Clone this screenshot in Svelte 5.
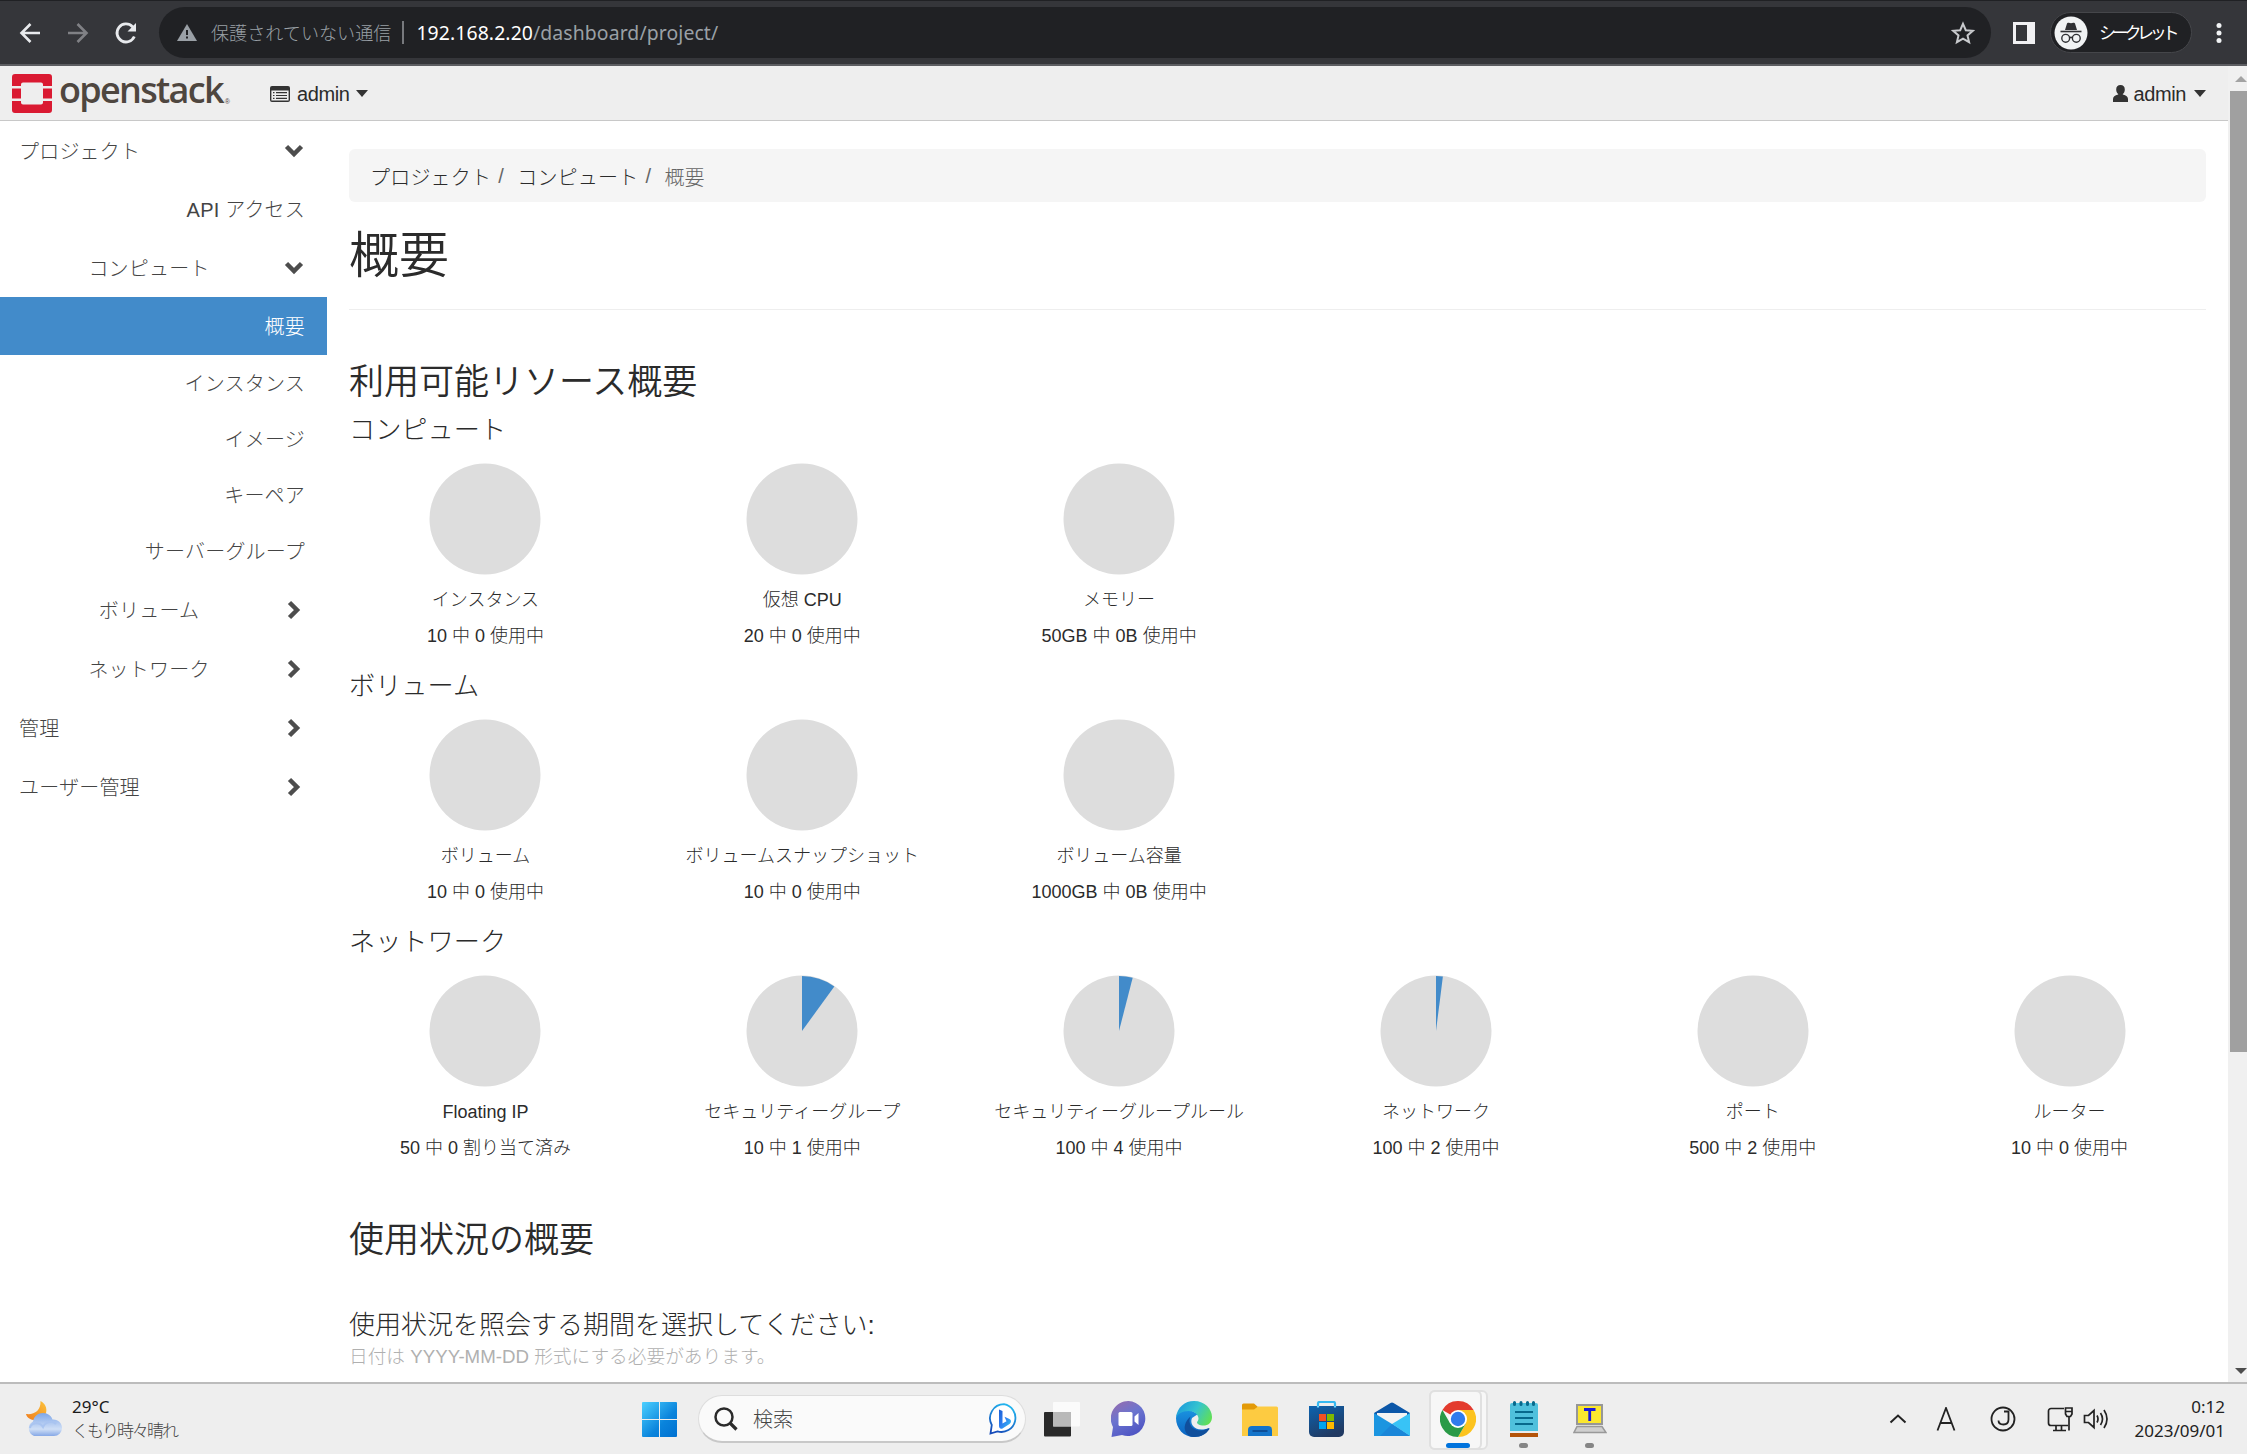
<script lang="ts">
	type NavItem = {
		label: string
		kind: 'root' | 'group' | 'leaf'
		height: number
		chevron?: 'down' | 'right'
		active?: boolean
	}

	type Quota = {
		label: string
		usage: string
		percent: number
	}

	const navItems: NavItem[] = [
		{ label: 'プロジェクト', kind: 'root', height: 59, chevron: 'down' },
		{ label: 'API アクセス', kind: 'leaf', height: 58 },
		{ label: 'コンピュート', kind: 'group', height: 59, chevron: 'down' },
		{ label: '概要', kind: 'leaf', height: 58, active: true },
		{ label: 'インスタンス', kind: 'leaf', height: 56 },
		{ label: 'イメージ', kind: 'leaf', height: 56 },
		{ label: 'キーペア', kind: 'leaf', height: 56 },
		{ label: 'サーバーグループ', kind: 'leaf', height: 57 },
		{ label: 'ボリューム', kind: 'group', height: 59, chevron: 'right' },
		{ label: 'ネットワーク', kind: 'group', height: 59, chevron: 'right' },
		{ label: '管理', kind: 'root', height: 59, chevron: 'right' },
		{ label: 'ユーザー管理', kind: 'root', height: 59, chevron: 'right' },
	]

	const sections: { title: string; quotas: Quota[] }[] = [
		{
			title: 'コンピュート',
			quotas: [
				{ label: 'インスタンス', usage: '10 中 0 使用中', percent: 0 },
				{ label: '仮想 CPU', usage: '20 中 0 使用中', percent: 0 },
				{ label: 'メモリー', usage: '50GB 中 0B 使用中', percent: 0 },
			],
		},
		{
			title: 'ボリューム',
			quotas: [
				{ label: 'ボリューム', usage: '10 中 0 使用中', percent: 0 },
				{ label: 'ボリュームスナップショット', usage: '10 中 0 使用中', percent: 0 },
				{ label: 'ボリューム容量', usage: '1000GB 中 0B 使用中', percent: 0 },
			],
		},
		{
			title: 'ネットワーク',
			quotas: [
				{ label: 'Floating IP', usage: '50 中 0 割り当て済み', percent: 0 },
				{ label: 'セキュリティーグループ', usage: '10 中 1 使用中', percent: 10 },
				{ label: 'セキュリティーグループルール', usage: '100 中 4 使用中', percent: 4 },
				{ label: 'ネットワーク', usage: '100 中 2 使用中', percent: 2 },
				{ label: 'ポート', usage: '500 中 2 使用中', percent: 0 },
				{ label: 'ルーター', usage: '10 中 0 使用中', percent: 0 },
			],
		},
	]

	function wedge(percent: number) {
		const angle = (percent / 100) * Math.PI * 2
		const x = 56 + 55 * Math.sin(angle)
		const y = 56 - 55 * Math.cos(angle)
		return `M56 56V1A55 55 0 0 1 ${x.toFixed(2)} ${y.toFixed(2)}Z`
	}
</script>

<div class="screen">
	<header class="browser">
		<div class="nav-buttons">
			<svg width="24" height="24" viewBox="0 0 24 24" fill="none" stroke="#e8eaed" stroke-width="2.6">
				<path d="M22 12H4M12.5 3 3.500 12l9 9" />
			</svg>
			<svg width="24" height="24" viewBox="0 0 24 24" fill="none" stroke="#808185" stroke-width="2.6">
				<path d="M2 12h18M11.500 3l9 9-9 9" />
			</svg>
			<svg width="24" height="24" viewBox="0 0 24 24" fill="none" stroke="#e8eaed" stroke-width="2.8">
				<path d="M20.300 15.500A9 9 0 1 1 18.500 5.700L20.500 8" />
				<path d="M22 2v8.500h-8.500z" fill="#e8eaed" stroke="none" />
			</svg>
		</div>
		<div class="address">
			<svg class="warn" width="20" height="17" viewBox="0 0 20 17">
				<path d="M10 0 20 17H0z" fill="#9aa0a6" />
				<path d="M9 6h2v5H9zM9 12.500h2v2H9z" fill="#202124" />
			</svg>
			<span class="insecure">保護されていない通信</span>
			<span class="divider"></span>
			<span class="url"><b>192.168.2.20</b>/dashboard/project/</span>
			<svg class="star" width="24" height="24" viewBox="0 0 24 24" fill="none" stroke="#c8cacd" stroke-width="2">
				<path d="M12 2.800l2.800 6.400 7 .6-5.300 4.600 1.600 6.800-6.100-3.600-6.100 3.600 1.600-6.800-5.300-4.600 7-.6z" />
			</svg>
		</div>
		<svg class="side-panel" width="22" height="22" viewBox="0 0 22 22">
			<path d="M0 0h22v22H0zM3 3v16h11V3z" fill="#f1f1f3" fill-rule="evenodd" />
		</svg>
		<div class="incognito">
			<svg width="34" height="34" viewBox="0 0 34 34">
				<circle cx="17" cy="17" r="16.500" fill="#f1f3f4" />
				<path d="M11 14 13 7.500c.3-1 1-1 1.800-.7 1.500.6 2.900.6 4.400 0 .8-.3 1.500-.3 1.800.7L23 14z" fill="#303134" />
				<path d="M6.500 15.500h21" stroke="#303134" stroke-width="1.600" />
				<g fill="none" stroke="#303134" stroke-width="1.400">
					<circle cx="11.700" cy="22.300" r="3.900" />
					<circle cx="22.300" cy="22.300" r="3.900" />
					<path d="M15.500 21.800q1.500-1 3 0" />
				</g>
			</svg>
			<span>シークレット</span>
		</div>
		<svg class="kebab" width="6" height="22" viewBox="0 0 6 22" fill="#f1f3f4">
			<circle cx="3" cy="3.500" r="2.500" />
			<circle cx="3" cy="11" r="2.500" />
			<circle cx="3" cy="18.500" r="2.500" />
		</svg>
	</header>

	<div class="viewport">
		<div class="page">
			<nav class="topbar">
				<div class="brand">
					<svg width="40" height="39" viewBox="0 0 40 39" fill="#da1a32">
						<path d="M0 12V3a3 3 0 0 1 3-3h34a3 3 0 0 1 3 3v9h-9v-1.500a2 2 0 0 0-2-2H11a2 2 0 0 0-2 2V12z" />
						<path d="M0 27v9a3 3 0 0 0 3 3h34a3 3 0 0 0 3-3v-9h-9v1.500a2 2 0 0 1-2 2H11a2 2 0 0 1-2-2V27z" />
						<path d="M0 14.500h9v10H0zM31 14.500h9v10h-9z" />
					</svg>
					<span class="wordmark">openstack</span>
					<span class="reg">®</span>
				</div>
				<div class="menu">
					<svg width="20" height="16" viewBox="0 0 20 16">
						<path d="M2 0h16a2 2 0 0 1 2 2v12a2 2 0 0 1-2 2H2a2 2 0 0 1-2-2V2a2 2 0 0 1 2-2zM1.400 4.500V14.500h17.200V4.500z" fill="#333" fill-rule="evenodd" />
						<path d="M3 6.700h1.500M6 6.700h11M3 9.500h1.500M6 9.500h11M3 12.300h1.500M6 12.300h11" stroke="#333" stroke-width="1.200" />
					</svg>
					<span>admin</span>
					<i class="caret"></i>
				</div>
				<div class="menu user">
					<svg width="15" height="17" viewBox="0 0 15 17" fill="#333">
						<path d="M7.500 0c2.800 0 4.300 1.800 4.300 4.400 0 2-.8 3.600-2 4.600v.4c3.500.8 5.200 2 5.200 4.600v3H0v-3c0-2.600 1.700-3.800 5.200-4.600V9c-1.200-1-2-2.600-2-4.600C3.200 1.800 4.700 0 7.500 0z" />
					</svg>
					<span>admin</span>
					<i class="caret"></i>
				</div>
			</nav>

			<div class="body">
				<aside>
					{#each navItems as item}
						<div class={`nav-item ${item.kind}`} class:active={item.active} style:height={`${item.height}px`}>
							<span>{item.label}</span>
							{#if item.chevron === 'down'}
								<svg width="20" height="14" viewBox="0 0 20 14" fill="none" stroke="#4d4d4d" stroke-width="4.500">
									<path d="m2.500 2.500 7.500 7.500 7.500-7.500" />
								</svg>
							{:else if item.chevron === 'right'}
								<svg width="17" height="20" viewBox="0 0 17 20" fill="none" stroke="#4d4d4d" stroke-width="4.500">
									<path d="m2.500 2.500 7.500 7.500-7.500 7.500" />
								</svg>
							{/if}
						</div>
					{/each}
				</aside>

				<main>
					<div class="breadcrumb">
						<span>プロジェクト</span><i>/</i><span>コンピュート</span><i>/</i><span class="current">概要</span>
					</div>
					<h1>概要</h1>
					<hr />
					<h2>利用可能リソース概要</h2>

					{#each sections as section}
						<section>
							<h3>{section.title}</h3>
							<div class="quotas">
								{#each section.quotas as quota}
									<div class="quota">
										<svg width="112" height="112" viewBox="0 0 112 112">
											<circle cx="56" cy="56" r="55.500" fill="#ddd" />
											{#if quota.percent > 0}
												<path d={wedge(quota.percent)} fill="#428bca" />
											{/if}
										</svg>
										<div class="quota-text">{quota.label}</div>
										<div class="quota-text">{quota.usage}</div>
									</div>
								{/each}
							</div>
						</section>
					{/each}

					<h2 class="usage">使用状況の概要</h2>
					<h3 class="period">使用状況を照会する期間を選択してください:</h3>
					<p>日付は YYYY-MM-DD 形式にする必要があります。</p>
				</main>
			</div>
		</div>
		<div class="scrollbar">
			<i class="up"></i>
			<div class="thumb"></div>
			<i class="down"></i>
		</div>
	</div>

	<footer>
		<div class="weather">
			<svg width="36" height="36" viewBox="0 0 36 36">
				<defs>
					<linearGradient id="moon" x1="0" y1="1" x2="1" y2="0">
						<stop offset="0" stop-color="#f07c1c" />
						<stop offset="1" stop-color="#fcc43c" />
					</linearGradient>
					<linearGradient id="cloud" x1="0" y1="0" x2="0" y2="1">
						<stop offset="0" stop-color="#7ea6e8" />
						<stop offset="0.700" stop-color="#cfdff6" />
						<stop offset="1" stop-color="#86a8e6" />
					</linearGradient>
				</defs>
				<path d="M14.500 0C24 5 22 19 9 19 5 19 1 17 0 13c8 1 15-3 14.500-13z" fill="url(#moon)" />
				<path d="M8 35a8 8 0 0 1-1-14.500C8 15 12 12 17 12c5 0 8.500 3 9.500 6.500C32 18 36 22 36 27a8 8 0 0 1-8 8z" fill="url(#cloud)" />
				<path d="M4 27c1-5 9-7 13-1 2-5 9-7 13-3" fill="none" stroke="#a9c4f0" stroke-width="2" />
			</svg>
			<div class="weather-text">
				<span>29°C</span>
				<span class="sub">くもり時々晴れ</span>
			</div>
		</div>

		<div class="slot start">
			<svg width="35" height="35" viewBox="0 0 35 35">
				<defs>
					<linearGradient id="win" x1="0" y1="0" x2="1" y2="1">
						<stop offset="0" stop-color="#4cd0ff" />
						<stop offset="0.600" stop-color="#0a84dc" />
						<stop offset="1" stop-color="#0070d0" />
					</linearGradient>
				</defs>
				<path d="M1 0h16v17H0V1a1 1 0 0 1 1-1zM18 0h16a1 1 0 0 1 1 1v16H18zM0 18h17v17H1a1 1 0 0 1-1-1zM18 18h17v16a1 1 0 0 1-1 1H18z" fill="url(#win)" />
			</svg>
		</div>

		<div class="search">
			<svg width="24" height="24" viewBox="0 0 24 24" fill="none" stroke="#2b2b2b" stroke-width="2.500">
				<circle cx="10" cy="10" r="8.500" />
				<path d="m16 16 6.500 6.500" stroke-width="3.200" />
			</svg>
			<span>検索</span>
			<svg class="bing" width="30" height="32" viewBox="0 0 30 32">
				<defs>
					<linearGradient id="bing" x1="0.700" y1="0" x2="0.300" y2="1">
						<stop offset="0" stop-color="#22b8f0" />
						<stop offset="1" stop-color="#164ab8" />
					</linearGradient>
					<linearGradient id="bing-b" x1="0" y1="0" x2="1" y2="1">
						<stop offset="0" stop-color="#1b5fd6" />
						<stop offset="0.500" stop-color="#2f7ff0" />
						<stop offset="1" stop-color="#35c8f0" />
					</linearGradient>
				</defs>
				<path d="M15 1.200a14 14 0 1 1-6.500 27.200L1.500 30.500 2.800 22A14 14 0 0 1 15 1.200z" fill="#fff" stroke="url(#bing)" stroke-width="1.800" />
				<path d="M10 6.500 13.500 8v12.500l4-2.200-2-4.500 5 2.200c2 .9 2 3.600 0 4.900l-7 4.500c-1.800 1-3.500-.3-3.500-2.300z" fill="url(#bing-b)" />
			</svg>
		</div>

		<div class="slot">
			<svg width="37" height="35" viewBox="0 0 37 35">
				<rect x="0" y="10" width="27" height="24.500" rx="1" fill="#292929" />
				<rect x="9" y="0" width="27" height="24.500" rx="1" fill="#fff" opacity="0.750" />
				<path d="M9 10h18v14.500H9z" fill="#b9b9b9" />
			</svg>
		</div>
		<div class="slot">
			<svg width="35" height="36" viewBox="0 0 35 36">
				<defs>
					<linearGradient id="chat" x1="0" y1="0" x2="0.500" y2="1">
						<stop offset="0" stop-color="#9b6bab" />
						<stop offset="0.500" stop-color="#6b74cf" />
						<stop offset="1" stop-color="#5056c4" />
					</linearGradient>
				</defs>
				<path d="M17.500 0a17.500 17.500 0 1 1-6.500 34L.5 36 2 26A17.500 17.500 0 0 1 17.500 0z" fill="url(#chat)" />
				<rect x="7.500" y="11" width="14" height="14" rx="1.500" fill="#fff" />
				<path d="m23.500 15.500 4-3.500v12l-4-3.500z" fill="#fff" />
			</svg>
		</div>
		<div class="slot">
			<svg width="36" height="36" viewBox="0 0 36 36">
				<defs>
					<linearGradient id="edge-top" x1="0" y1="0.300" x2="1" y2="0.700">
						<stop offset="0" stop-color="#1c9bdc" />
						<stop offset="0.500" stop-color="#35c4cf" />
						<stop offset="1" stop-color="#62e052" />
					</linearGradient>
					<linearGradient id="edge-left" x1="0" y1="0" x2="0" y2="1">
						<stop offset="0" stop-color="#1a93e0" />
						<stop offset="1" stop-color="#0b62c0" />
					</linearGradient>
				</defs>
				<path d="M0 17C1 8 8 8 14 9l8 4-6 4c-3 7 4 15 17 10-3 6-8 9-15 9C8 36 0 28 0 17z" fill="url(#edge-left)" />
				<path d="M0 17C1 6 9 0 18 0c11 0 18 8 18 16 0 6-4 8.500-8.500 8.500-4 0-6.500-1.500-6.500-3 0-1 1.500-1.500 1.500-4 0-4-4.500-7.500-10-7.500C6 10 1.500 13 0 17z" fill="url(#edge-top)" />
				<path d="M14.500 15.500C11 23 17 30 25 29.500c3.500 0 6-1.500 7.500-2.200.9-.3 1.200.3.8 1C30 33.500 24.500 36 18 36c-7 0-10.500-7-9-12 .8-3.500 3-6.500 5.500-8.500z" fill="#104f9c" />
			</svg>
		</div>
		<div class="slot">
			<svg width="36" height="33" viewBox="0 0 36 33">
				<path d="M0 2a1.500 1.500 0 0 1 1.500-1.500H12L16 4v6H0z" fill="#e39a08" />
				<path d="M0 6.500h12L16 3.500h18.500A1.500 1.500 0 0 1 36 5v28H0z" fill="#fdcb41" />
				<path d="M6 33v-6a4 4 0 0 1 4-4h16a4 4 0 0 1 4 4v6z" fill="#1474ca" />
				<path d="M10.500 28h15" stroke="#0c4a92" stroke-width="1.800" />
			</svg>
		</div>
		<div class="slot">
			<svg width="35" height="36" viewBox="0 0 35 36">
				<defs>
					<linearGradient id="store" x1="0" y1="0" x2="0.500" y2="1">
						<stop offset="0" stop-color="#0c63b0" />
						<stop offset="1" stop-color="#213a62" />
					</linearGradient>
				</defs>
				<path d="M9 8V2.500A1.500 1.500 0 0 1 10.500 1h14A1.500 1.500 0 0 1 26 2.500V8" fill="none" stroke="#35b8f0" stroke-width="2.200" />
				<path d="M0 5h35v26a5 5 0 0 1-5 5H5a5 5 0 0 1-5-5z" fill="url(#store)" />
				<path d="M9 5v1.500M26 5v1.500" stroke="#6ad4ff" stroke-width="2.200" />
				<path d="M10 13h7v7h-7z" fill="#f25022" />
				<path d="M18 13h7v7h-7z" fill="#7fba00" />
				<path d="M10 21h7v7h-7z" fill="#00a4ef" />
				<path d="M18 21h7v7h-7z" fill="#ffb900" />
			</svg>
		</div>
		<div class="slot">
			<svg width="36" height="34" viewBox="0 0 36 34">
				<path d="M0 11 16.500 1q1.500-1 3 0L36 11v6H0z" fill="#0c57a8" />
				<path d="M3 11h30v10L18 30 3 21z" fill="#f3f3f3" />
				<path d="M0 11l18 11L36 34H0z" fill="#1b95e0" />
				<path d="M36 11 18 22l18 12z" fill="#38c3f6" />
				<path d="M18 22 36 34H6z" fill="#1a86d8" />
			</svg>
		</div>
		<div class="slot running">
			<div class="tile-back"></div>
			<div class="tile"></div>
			<svg width="36" height="36" viewBox="0 0 36 36">
				<path d="M18 18 2.410 9A18 18 0 0 1 33.590 9z" fill="#e33b2e" />
				<path d="M18 9h15.590A18 18 0 0 1 18 36l7.800-13.500z" fill="#fcc31e" />
				<path d="M10.200 22.500 2.410 9A18 18 0 0 0 18 36l7.800-13.500z" fill="#2a9a47" />
				<circle cx="18" cy="18" r="9" fill="#fff" />
				<circle cx="18" cy="18" r="7.200" fill="#2f7bed" />
			</svg>
			<i class="indicator"></i>
		</div>
		<div class="slot">
			<svg width="28" height="36" viewBox="0 0 28 36">
				<path d="M0 30h28v6H0z" fill="#b4540a" />
				<path d="M0 29h28v3H0z" fill="#ececec" />
				<path d="M0 4a2 2 0 0 1 2-2h24a2 2 0 0 1 2 2v26H0z" fill="#4fc0dc" />
				<path d="M5 11h18M5 17h18M5 23h18" stroke="#07698c" stroke-width="2" />
				<path d="M4.500 1.500v2M11 1.500v2M17.500 1.500v2M23.500 1.500v2" stroke="#07698c" stroke-width="3" stroke-linecap="round" />
			</svg>
			<i class="dot"></i>
		</div>
		<div class="slot">
			<svg width="34" height="30" viewBox="0 0 34 30">
				<rect x="4" y="1" width="25" height="19" fill="#fbe72f" stroke="#979797" stroke-width="2" />
				<path d="M11 5.500h11.500M16.700 5.500V17" stroke="#1c1cd8" stroke-width="2.800" fill="none" />
				<path d="M4 22.500h25l4 6H1z" fill="#cfcfcf" stroke="#999" stroke-width="1.500" />
			</svg>
			<i class="dot"></i>
		</div>

		<div class="tray">
			<svg width="18" height="10" viewBox="0 0 18 10" fill="none" stroke="#222" stroke-width="2">
				<path d="m1.500 8.500 7.500-7 7.500 7" />
			</svg>
			<svg class="ime" width="20" height="24" viewBox="0 0 20 24" fill="none" stroke="#222" stroke-width="1.800">
				<path d="M1.500 23.500 10 1l8.500 22.500M4.500 16h11" />
			</svg>
			<svg class="ime-j" width="26" height="26" viewBox="0 0 26 26" fill="none" stroke="#222" stroke-width="1.800">
				<circle cx="13" cy="13" r="11.500" />
				<path d="M14 5.500h4.500v8c0 3-2 5-5 5s-5-1.500-5-4" />
			</svg>
			<svg class="net" width="26" height="26" viewBox="0 0 26 26" fill="none" stroke="#222" stroke-width="1.700">
				<path d="M17 2.500H4a2.500 2.500 0 0 0-2.500 2.500v12A2.500 2.500 0 0 0 4 19.500h17M9 19.500v5M14.500 19.500v5M6 24.500h13M22 11v13.500" />
				<path d="M18.500 2h6.500v6l-1.500 2.500H20L18.500 8zM18.500 5.500H25" />
			</svg>
			<svg class="vol" width="26" height="22" viewBox="0 0 26 22" fill="none" stroke="#222" stroke-width="1.700">
				<path d="M1.500 7.500h4L11 2.500v17l-5.500-5h-4zM14 7.500q2 3.500 0 7M17.500 5q4 6 0 12M21 2q6 9 0 18" />
			</svg>
			<div class="clock">
				<span>0:12</span>
				<span>2023/09/01</span>
			</div>
		</div>
	</footer>
</div>

<style>
	:global(body) {
		margin: 0;
	}

	.screen {
		display: flex;
		flex-direction: column;
		width: 2247px;
		height: 1454px;
		overflow: hidden;
		background: #fff;
		color: #2b2b2b;
		font-family: 'Liberation Sans', 'Noto Sans CJK JP', sans-serif;
		font-size: 20px;
		font-weight: 300;
		white-space: nowrap;
	}

	svg {
		display: block;
		flex-shrink: 0;
	}

	/* browser toolbar */
	.browser {
		display: flex;
		align-items: center;
		flex-shrink: 0;
		box-sizing: border-box;
		height: 66px;
		border-top: 1px solid #202124;
		border-bottom: 2px solid #5c5d61;
		background: #35363a;
	}

	.nav-buttons {
		display: flex;
		gap: 24px;
		width: 141px;
		padding-left: 18px;
	}

	.address {
		display: flex;
		align-items: center;
		box-sizing: border-box;
		width: 1832px;
		height: 51px;
		padding: 0 16px 0 18px;
		border-radius: 26px;
		background: #202124;
		color: #9aa0a6;
		font-family: 'Noto Sans', 'Noto Sans CJK JP', sans-serif;
	}

	.insecure {
		margin: -2px 0 0 14px;
		font-size: 18.100px;
	}

	.divider {
		width: 2px;
		height: 23px;
		margin: 0 12px 0 11px;
		background: #77797d;
	}

	.url {
		font-size: 19.400px;
		font-weight: 400;
		letter-spacing: 0.1px;
	}

	.url b {
		color: #fff;
		font-weight: 400;
	}

	.star {
		margin-left: auto;
	}

	.side-panel {
		margin-left: 22px;
	}

	.incognito {
		display: flex;
		align-items: center;
		box-sizing: border-box;
		width: 142px;
		height: 41px;
		margin-left: 15px;
		padding-left: 3px;
		border: 1px solid #45464a;
		border-radius: 21px;
		background: #202124;
		color: #fff;
	}

	.incognito span {
		margin: -2px 0 0 11px;
		font-size: 17px;
		font-weight: 400;
		letter-spacing: -4.300px;
	}

	.kebab {
		margin-left: 24px;
	}

	/* page */
	.viewport {
		display: flex;
		height: 1316px;
	}

	.page {
		width: 2228px;
		overflow: hidden;
	}

	.topbar {
		display: flex;
		align-items: center;
		box-sizing: border-box;
		height: 55px;
		padding: 0 22px 0 12px;
		border-bottom: 1px solid #c8c8c8;
		background: #eee;
	}

	.brand {
		display: flex;
		align-items: center;
		width: 258px;
	}

	.wordmark {
		margin: -7px 0 0 7px;
		color: #4e463f;
		font-family: 'Open Sans', 'Noto Sans', sans-serif;
		font-size: 36px;
		font-weight: 600;
		line-height: 54px;
		letter-spacing: -1.700px;
	}

	.reg {
		margin: 16px 0 0 2px;
		color: #4e463f;
		font-size: 7px;
		font-weight: 400;
	}

	.menu {
		display: flex;
		align-items: center;
		padding-top: 1px;
		line-height: 24px;
	}

	.menu span {
		margin: 0 7px;
		letter-spacing: -0.400px;
	}

	.menu.user {
		margin-left: auto;
	}

	.menu.user span {
		margin: 0 8px 0 6px;
	}

	.caret {
		border: 6px solid transparent;
		border-top: 7px solid #333;
		border-bottom: 0;
	}

	.body {
		display: flex;
	}

	aside {
		width: 327px;
	}

	.nav-item {
		display: flex;
		align-items: center;
		justify-content: space-between;
		box-sizing: border-box;
		padding: 0 23px 0 19px;
		color: #444;
	}

	.nav-item.leaf {
		justify-content: flex-end;
		padding: 0 22px 2px 0;
	}

	.nav-item span {
		letter-spacing: 0.200px;
	}

	.nav-item.group span {
		width: 260px;
		text-align: center;
	}

	.nav-item.active {
		background: #428bca;
		color: #fff;
	}

	main {
		width: 1857px;
		padding: 28px 0 0 22px;
	}

	.breadcrumb {
		display: flex;
		align-items: center;
		box-sizing: border-box;
		height: 53px;
		padding: 1px 0 0 21px;
		border-radius: 6px;
		background: #f5f5f5;
	}

	.breadcrumb span {
		letter-spacing: 0.200px;
	}

	.breadcrumb i {
		width: 6px;
		margin: 0 13px 0 7px;
		font-style: normal;
		color: #666;
	}

	.breadcrumb .current {
		color: #666;
	}

	h1,
	h2,
	h3,
	p {
		margin: 0;
		font-weight: 300;
	}

	h1 {
		margin-top: 24px;
		font-size: 50px;
		font-weight: 350;
		line-height: 60px;
	}

	hr {
		height: 1px;
		margin: 23px 0 0;
		border: 0;
		background: #eee;
	}

	h2 {
		margin: 52px 0 13px;
		font-size: 35px;
		font-weight: 350;
		line-height: 40px;
	}

	h3 {
		font-size: 26.200px;
		line-height: 30px;
	}

	section {
		height: 256px;
	}

	.quotas {
		display: flex;
		width: 1901px;
		margin: 18px 0 0 -22px;
	}

	.quota {
		display: flex;
		flex-direction: column;
		align-items: center;
		width: 316.850px;
	}

	.quota-text {
		margin-top: 12px;
		font-size: 18px;
		line-height: 24px;
	}

	.quota svg + .quota-text {
		margin-top: 13px;
	}

	.usage {
		margin: 37px 0 50px;
	}

	.period {
		font-size: 26px;
	}

	p {
		margin-top: 5px;
		color: #b0b0b0;
		font-size: 18.700px;
		line-height: 24px;
	}

	/* scrollbar */
	.scrollbar {
		display: flex;
		flex-direction: column;
		align-items: center;
		box-sizing: border-box;
		width: 19px;
		padding: 10px 0 8px 2px;
		background: #f0f0f0;
	}

	.up,
	.down {
		margin-left: 4px;
		border: 6px solid transparent;
	}

	.up {
		border-top: 0;
		border-bottom-color: #a3a3a3;
	}

	.thumb {
		width: 17px;
		height: 961px;
		margin-top: 9px;
		background: #a0a0a0;
	}

	.down {
		margin-top: auto;
		border-bottom: 0;
		border-top-color: #4d4d4d;
	}

	/* taskbar */
	footer {
		display: flex;
		align-items: center;
		box-sizing: border-box;
		height: 72px;
		border-top: 2px solid #bcbcbc;
		background: #eee;
		font-family: 'Noto Sans', 'Noto Sans CJK JP', sans-serif;
	}

	.weather {
		display: flex;
		align-items: center;
		box-sizing: border-box;
		width: 626px;
		padding-left: 26px;
	}

	.weather-text {
		display: flex;
		flex-direction: column;
		margin-left: 10px;
		color: #1b1b1b;
		font-size: 17px;
		font-weight: 400;
		line-height: 24px;
	}

	.sub {
		color: #444;
		font-weight: 300;
		letter-spacing: -2px;
	}

	.slot {
		position: relative;
		display: flex;
		align-items: center;
		justify-content: center;
		width: 66px;
		height: 70px;
	}

	.slot svg {
		position: relative;
	}

	.slot.start {
		width: 72px;
		box-sizing: border-box;
		padding-right: 5px;
	}

	.search {
		display: flex;
		align-items: center;
		box-sizing: border-box;
		width: 328px;
		height: 48px;
		margin-right: 3px;
		padding: 0 6px 0 15px;
		border: 1px solid #ddd;
		border-bottom: 2px solid #c8c8c8;
		border-radius: 24px;
		background: #fafafa;
		color: #444;
	}

	.search span {
		margin-left: 15px;
		font-size: 20px;
	}

	.bing {
		margin-left: auto;
	}

	.tile,
	.tile-back {
		position: absolute;
		top: 6px;
		left: 4px;
		box-sizing: border-box;
		width: 53px;
		height: 60px;
		border: 2px solid #e0e0e0;
		border-radius: 6px;
		background: #f7f7f7;
	}

	.tile-back {
		width: 59px;
	}

	.indicator,
	.dot {
		position: absolute;
		bottom: 6px;
		left: 21px;
		width: 24px;
		height: 5px;
		border-radius: 3px;
		background: #0073dd;
	}

	.dot {
		left: 28px;
		width: 9px;
		background: #858585;
	}

	.tray {
		display: flex;
		align-items: center;
		margin-left: auto;
		padding-right: 22px;
	}

	.ime {
		margin-left: 29px;
	}

	.ime-j {
		margin-left: 34px;
	}

	.net {
		margin-left: 31px;
	}

	.vol {
		margin-left: 10px;
	}

	.clock {
		display: flex;
		flex-direction: column;
		align-items: flex-end;
		width: 116px;
		color: #222;
		font-size: 17px;
		font-weight: 400;
		line-height: 24px;
	}
</style>
